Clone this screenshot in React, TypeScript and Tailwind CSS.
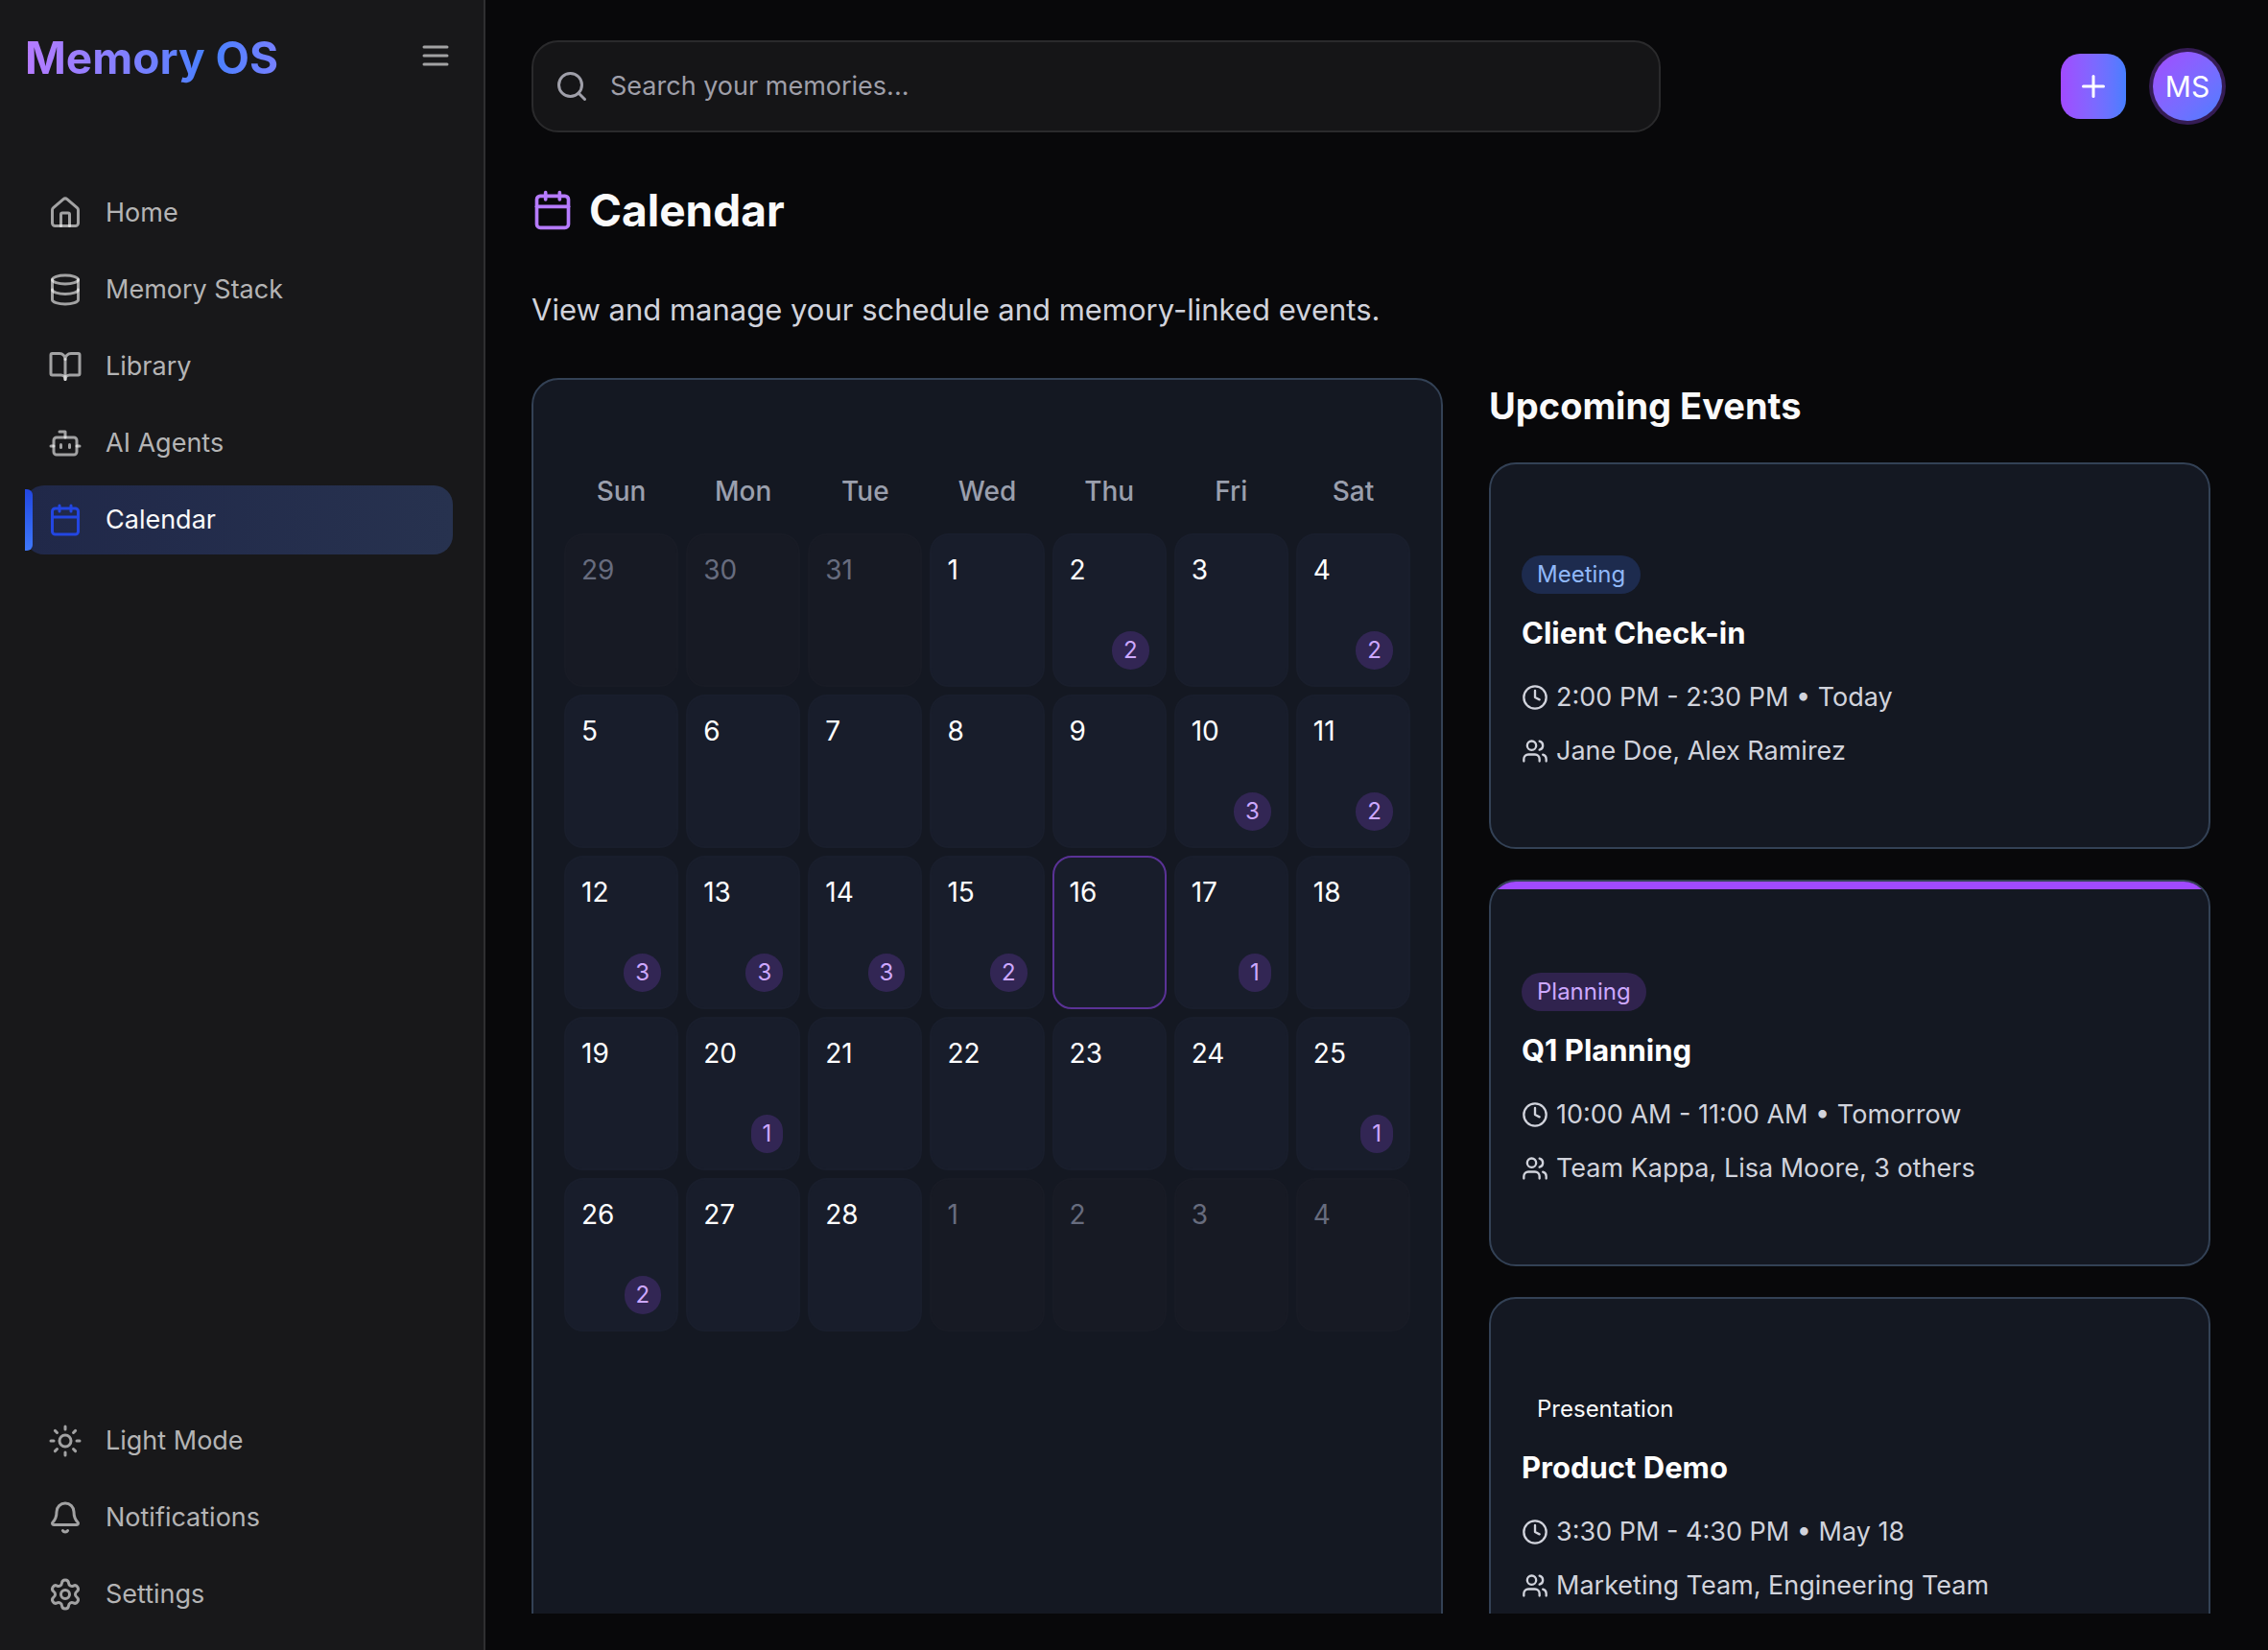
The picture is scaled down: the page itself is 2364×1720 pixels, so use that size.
import React from "react";
import {
  Bell,
  BookOpen,
  Bot,
  Calendar,
  Clock,
  Database,
  House,
  Plus,
  Search,
  Settings,
  Sun,
  Users,
  type LucideIcon,
} from "lucide-react";

type NavEntry = { label: string; icon: LucideIcon; active?: boolean };

const mainNav: NavEntry[] = [
  { label: "Home", icon: House },
  { label: "Memory Stack", icon: Database },
  { label: "Library", icon: BookOpen },
  { label: "AI Agents", icon: Bot },
  { label: "Calendar", icon: Calendar, active: true },
];

const footerNav: NavEntry[] = [
  { label: "Light Mode", icon: Sun },
  { label: "Notifications", icon: Bell },
  { label: "Settings", icon: Settings },
];

type Day = { day: number; outside?: boolean; today?: boolean; events?: number };

const eventCounts: Record<number, number> = {
  2: 2, 4: 2, 10: 3, 11: 2, 12: 3, 13: 3, 14: 3, 15: 2, 17: 1, 20: 1, 25: 1, 26: 2,
};

const days: Day[] = [
  ...[29, 30, 31].map((day) => ({ day, outside: true })),
  ...Array.from({ length: 28 }, (_, i) => ({
    day: i + 1,
    today: i + 1 === 16,
    events: eventCounts[i + 1],
  })),
  ...[1, 2, 3, 4].map((day) => ({ day, outside: true })),
];

const weekdays = ["Sun", "Mon", "Tue", "Wed", "Thu", "Fri", "Sat"];
const weeks = Array.from({ length: 5 }, (_, i) => days.slice(i * 7, i * 7 + 7));

const events = [
  {
    tag: "Meeting",
    tagClass: "bg-[#1d2b4e] text-[#90b8f8]",
    title: "Client Check-in",
    time: "2:00 PM - 2:30 PM • Today",
    people: "Jane Doe, Alex Ramirez",
  },
  {
    tag: "Planning",
    tagClass: "bg-[#30234e] text-[#cda8ff]",
    title: "Q1 Planning",
    time: "10:00 AM - 11:00 AM • Tomorrow",
    people: "Team Kappa, Lisa Moore, 3 others",
    highlighted: true,
  },
  {
    tag: "Presentation",
    tagClass: "text-[#fafafa]",
    title: "Product Demo",
    time: "3:30 PM - 4:30 PM • May 18",
    people: "Marketing Team, Engineering Team",
  },
];

function NavItem({ label, icon: Icon, active }: NavEntry) {
  return (
    <a
      href="#"
      aria-current={active ? "page" : undefined}
      className={
        "relative flex h-18 items-center gap-6 rounded-[20px] px-6 text-[27px] leading-10 " +
        (active
          ? "bg-linear-to-r from-[#202849] to-[#27324f] text-[#fafafa]"
          : "text-[#b4b4b5]")
      }
    >
      {active && (
        <span className="absolute top-1 bottom-1 left-0 w-2 rounded-r-md bg-linear-to-b from-[#2346e2] to-[#3f78fb]" />
      )}
      <Icon size={36} className={active ? "text-[#2346e2]" : "text-white/60"} />
      {label}
    </a>
  );
}

function Sidebar() {
  return (
    <aside className="flex w-[506px] shrink-0 flex-col border-r-2 border-[#2f2f31] bg-[#18181a] pr-8 pb-[22px] pl-[26px]">
      <div className="flex items-start gap-6 pt-8">
        <div className="flex-1 bg-linear-to-r from-[#b67bff] via-[#4480ff] to-[#b67bff] bg-clip-text text-[46px] leading-[56px] font-bold text-transparent">
          Memory OS
        </div>
        <button aria-label="Toggle menu" className="mt-2 text-white/60">
          <svg
            width="36"
            height="36"
            viewBox="0 0 24 24"
            fill="none"
            stroke="currentColor"
            strokeWidth="2"
            strokeLinecap="round"
          >
            <path d="M4 6h16M4 12h16M4 18h16" />
          </svg>
        </button>
      </div>
      <nav className="mt-[98px] flex flex-1 flex-col gap-2">
        {mainNav.map((item) => (
          <NavItem key={item.label} {...item} />
        ))}
      </nav>
      <nav className="flex flex-col gap-2">
        {footerNav.map((item) => (
          <NavItem key={item.label} {...item} />
        ))}
      </nav>
    </aside>
  );
}

function Header() {
  return (
    <header className="flex items-center justify-between pr-11 pl-12">
      <label className="flex h-24 w-2/3 items-center gap-[22px] rounded-[28px] border-2 border-[#2a2a2c] bg-[#151517] px-[22px]">
        <Search size={36} className="shrink-0 text-[#9f9fa9]" />
        <input
          type="text"
          aria-label="Search"
          placeholder="Search your memories..."
          className="min-w-0 flex-1 bg-transparent text-[27px] leading-10 text-white outline-none placeholder:text-[#9f9fa9]"
        />
      </label>
      <div className="flex items-center gap-6">
        <button
          aria-label="Add memory"
          className="flex size-[68px] items-center justify-center rounded-[20px] bg-linear-to-r from-[#a14aff] to-[#467eff] text-white"
        >
          <Plus size={36} />
        </button>
        <button className="flex size-20 rounded-full bg-[#351c54] p-1 text-[30px] leading-10 text-white">
          <span className="flex flex-1 items-center justify-center self-stretch rounded-full bg-linear-to-br from-[#a14aff] to-[#467eff]">
            MS
          </span>
        </button>
      </div>
    </header>
  );
}

function DayCell({ day, outside, today, events: count }: Day) {
  const look = today
    ? "border-[#5a3296] bg-[#181d2b] text-white"
    : outside
      ? "border-[#181b25] bg-[#171a24] text-[#676c7e]"
      : "border-[#191e2c] bg-[#181d2b] text-white";
  return (
    <div
      role="gridcell"
      className={"flex h-40 flex-col justify-between rounded-[20px] border-2 p-4 text-[28px] leading-10 " + look}
    >
      <span>{day}</span>
      {count && (
        <span className="self-end rounded-full bg-[#322654] px-3 text-2xl leading-10 text-[#cda8ff]">
          {count}
        </span>
      )}
    </div>
  );
}

function MonthCard() {
  return (
    <section
      role="grid"
      aria-label="Month"
      className="rounded-[28px] border-2 border-[#334155] bg-[#141822] px-8 pt-24 pb-8"
    >
      <div role="row" className="mb-6 grid grid-cols-7 gap-2">
        {weekdays.map((name) => (
          <div
            key={name}
            role="columnheader"
            className="text-center text-[28px] leading-10 font-medium text-[#9a9fad]"
          >
            {name}
          </div>
        ))}
      </div>
      <div className="flex flex-col gap-2">
        {weeks.map((week, i) => (
          <div key={i} role="row" className="grid grid-cols-7 gap-2">
            {week.map((d, j) => (
              <DayCell key={j} {...d} />
            ))}
          </div>
        ))}
      </div>
    </section>
  );
}

function EventCard({ event }: { event: (typeof events)[number] }) {
  return (
    <article className="relative overflow-hidden rounded-[28px] border-2 border-[#334155] bg-[#141822] px-8 pt-[95px] pb-20">
      {event.highlighted && <span className="absolute inset-x-0 top-0 h-2 bg-[#a04aff]" />}
      <span className={"block w-fit rounded-full px-4 text-2xl leading-10 " + event.tagClass}>
        {event.tag}
      </span>
      <h3 className="mt-4 text-[31px] leading-[50px] font-bold text-white">{event.title}</h3>
      <div className="mt-[22px] flex flex-col gap-4 text-[27px] leading-10 text-[#d1d3dc]">
        <p className="flex items-center gap-2">
          <Clock size={28} />
          {event.time}
        </p>
        <p className="flex items-center gap-2">
          <Users size={28} />
          {event.people}
        </p>
      </div>
    </article>
  );
}

export default function App() {
  return (
    <div className="flex h-screen overflow-hidden bg-[#08080a] font-['Inter',sans-serif] text-[#fafafa]">
      <Sidebar />
      <div className="flex min-w-0 flex-1 flex-col pt-[42px] pb-[38px]">
        <Header />
        <main className="min-h-0 flex-1 overflow-hidden pt-[53px] pr-[60px] pl-12">
          <h1 className="flex items-center gap-4 text-[46px] leading-[56px] font-bold">
            <Calendar size={44} className="text-[#b67bff]" />
            Calendar
          </h1>
          <p className="mt-[52px] text-[31px] leading-[48px] text-[#d1d3dc]">
            View and manage your schedule and memory-linked events.
          </p>
          <div className="mt-[47px] grid h-[1600px] grid-cols-[950fr_752fr] gap-12">
            <MonthCard />
            <section>
              <h2 className="mb-[30px] text-[38px] leading-[58px] font-bold">Upcoming Events</h2>
              <div className="flex flex-col gap-8">
                {events.map((event) => (
                  <EventCard key={event.title} event={event} />
                ))}
              </div>
            </section>
          </div>
        </main>
      </div>
    </div>
  );
}
